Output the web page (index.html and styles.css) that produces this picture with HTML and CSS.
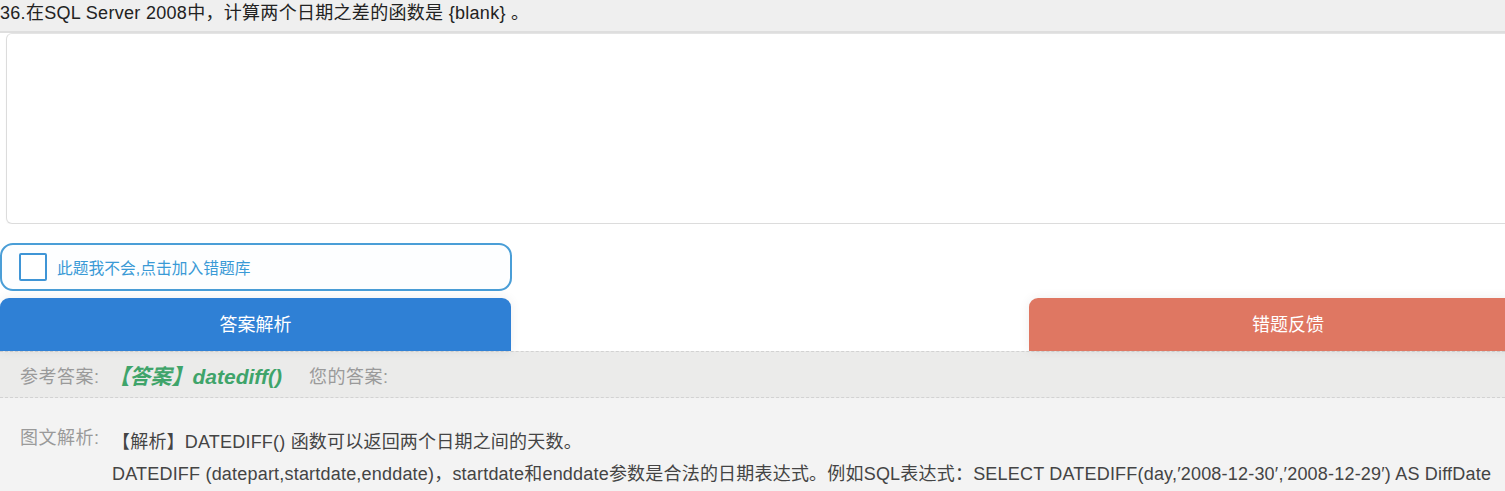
FILE: index.html
```html
<!DOCTYPE html>
<html lang="zh">
<head>
<meta charset="utf-8">
<link rel="stylesheet" href="styles.css">
</head>
<body>
<div class="page">
  <div class="question">36.在SQL Server 2008中，计算两个日期之差的函数是 {blank} 。</div>
  <div class="answer-area">
    <div class="textbox"></div>
  </div>
  <div class="controls">
    <label class="wrong-check">
      <span class="box"></span>
      <span class="wrong-text">此题我不会,点击加入错题库</span>
    </label>
    <div class="buttons">
      <div class="btn btn-blue">答案解析</div>
      <div class="btn btn-red">错题反馈</div>
    </div>
  </div>
  <div class="ref">
    <span class="ref-label">参考答案:</span>
    <span class="ref-value">【答案】datediff()</span>
    <span class="ref-label mine">您的答案:</span>
  </div>
  <div class="analysis">
    <div class="an-label">图文解析:</div>
    <div class="an-body">
      <p>【解析】DATEDIFF() 函数可以返回两个日期之间的天数。</p>
      <p>DATEDIFF (datepart,startdate,enddate)，startdate和enddate参数是合法的日期表达式。例如SQL表达式：SELECT DATEDIFF(day,′2008-12-30′,′2008-12-29′) AS DiffDate</p>
    </div>
  </div>
</div>
</body>
</html>
```

FILE: styles.css
```css
html, body {
  margin: 0;
  padding: 0;
  background: #ffffff;
  overflow: hidden;
}
body {
  font-family: "Liberation Sans", "Noto Sans CJK SC", sans-serif;
  color: #222;
}
.page {
  width: 1505px;
  height: 491px;
  overflow: hidden;
}
.question {
  height: 31px;
  line-height: 26px;
  background: #efefef;
  border-bottom: 2px solid #dedede;
  font-size: 18px;
  letter-spacing: 0.3px;
  color: #222;
  white-space: nowrap;
}
.answer-area {
  padding: 0 0 0 6px;
  background: #fff;
}
.textbox {
  height: 189px;
  margin-right: -20px;
  border: 1px solid #dcdcdc;
  border-top-color: #e4e4e4;
  border-radius: 6px;
  background: #fff;
  box-shadow: 0 1px 2px rgba(0,0,0,0.04);
}
.controls {
  padding-top: 19px;
  background: #fff;
}
.wrong-check {
  display: flex;
  align-items: center;
  gap: 10px;
  box-sizing: border-box;
  width: 512px;
  height: 48px;
  padding-left: 17px;
  border: 2px solid #4a9ed7;
  border-radius: 13px;
  background: #fdfeff;
}
.box {
  width: 24px;
  height: 24px;
  border: 2px solid #3f95d6;
  border-radius: 2px;
  background: #fff;
}
.wrong-text {
  font-size: 15.75px;
  color: #3a9ad6;
}
.buttons {
  display: flex;
  justify-content: space-between;
  margin-top: 7px;
}
.btn {
  height: 53px;
  line-height: 54px;
  text-align: center;
  color: #fff;
  font-size: 18px;
  border-radius: 9px 9px 0 0;
  box-shadow: 0 0 12px rgba(0,0,0,0.07);
}
.btn-blue {
  width: 511px;
  background: #2f80d5;
}
.btn-red {
  width: 518px;
  margin-right: -42px;
  background: #df7762;
}
.ref {
  display: flex;
  align-items: center;
  height: 45px;
  padding-left: 20px;
  background: #ebebea;
  border-top: 1px dashed #d2d2d2;
  border-bottom: 1px dashed #d2d2d2;
  font-size: 18px;
}
.ref-label {
  color: #9a9a9a;
  letter-spacing: 0.5px;
}
.ref-value {
  margin-left: 9px;
  color: #3fa46a;
  font-weight: bold;
  font-style: italic;
  font-size: 21px;
}
.mine {
  margin-left: 27px;
}
.analysis {
  display: flex;
  background: #f3f3f3;
  padding: 28px 0 20px 20px;
  min-height: 100px;
  font-size: 18px;
}
.an-label {
  width: 92px;
  flex: none;
  color: #9a9a9a;
  letter-spacing: 0.5px;
  line-height: 24px;
}
.an-body {
  color: #444;
  letter-spacing: 0.2px;
  white-space: nowrap;
}
.an-body p {
  margin: 0;
  line-height: 32px;
}
```
